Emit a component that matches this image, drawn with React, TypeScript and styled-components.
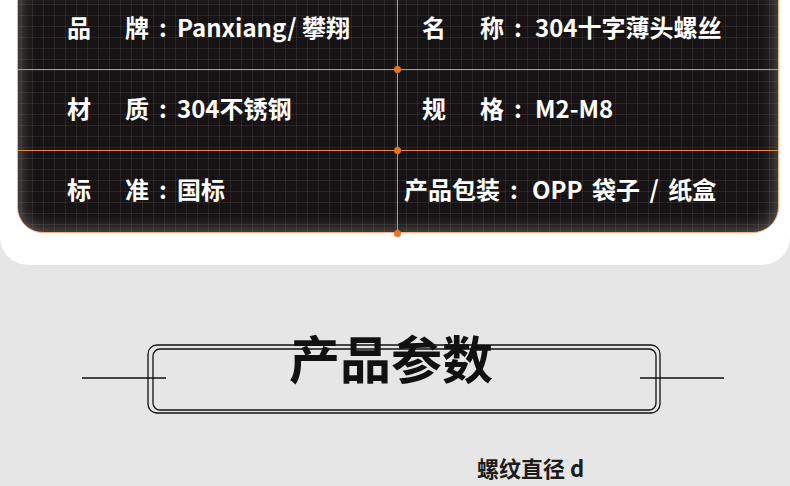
import React from 'react';
import styled, { createGlobalStyle } from 'styled-components';

const GlobalStyle = createGlobalStyle`
  html, body {
    margin: 0;
    padding: 0;
    background: #e6e6e6;
    overflow: hidden;
  }
  body {
    font-family: "Noto Sans CJK SC", "Noto Sans", sans-serif;
  }
`;

const Page = styled.div`
  width: 790px;
  height: 486px;
  display: flex;
  flex-direction: column;
  background: #e6e6e6;
`;

const TopPanel = styled.div`
  height: 265px;
  box-sizing: border-box;
  background: #ffffff;
  border-radius: 0 0 28px 28px;
  padding: 0 13px 0 17px;
  overflow: hidden;
`;

const SpecCard = styled.div`
  margin-top: -12px;
  width: 760px;
  display: grid;
  grid-template-columns: 380px 380px;
  grid-template-rows: repeat(3, 81px);
  background-color: #171314;
  background-image:
    linear-gradient(rgba(255, 255, 255, 0.075) 1px, transparent 1px),
    linear-gradient(90deg, rgba(255, 255, 255, 0.075) 1px, transparent 1px);
  background-size: 11px 11px;
  background-position: 3px 4px;
  border: 1px solid #f3b083;
  border-radius: 0 0 26px 26px;
  box-shadow: inset 0 0 18px rgba(200, 190, 185, 0.5);
`;

const Cell = styled.div<{ $left?: boolean; $last?: boolean; $pad: number }>`
  position: relative;
  display: flex;
  align-items: center;
  padding-left: ${(p) => p.$pad}px;
  padding-bottom: 6px;
  border-bottom: ${(p) => (p.$last ? 'none' : '1px solid #ee8a3c')};
  border-right: ${(p) => (p.$left ? '1px solid #ee8a3c' : 'none')};
  color: #ffffff;
  font-size: 24px;
  font-weight: 700;
  white-space: nowrap;
`;

const Dot = styled.span<{ $last?: boolean }>`
  position: absolute;
  right: -4px;
  bottom: ${(p) => (p.$last ? '-5px' : '-4px')};
  width: 7px;
  height: 7px;
  border-radius: 50%;
  background: #ea7520;
  z-index: 2;
`;

const Label = styled.span<{ $width?: number }>`
  display: flex;
  justify-content: space-between;
  width: ${(p) => (p.$width ? `${p.$width}px` : 'auto')};
`;

const Colon = styled.span<{ $wide?: boolean }>`
  width: ${(p) => (p.$wide ? '28px' : '28px')};
  text-align: center;
`;

const Value = styled.span<{ $wide?: boolean; $shift: number }>`
  margin-left: ${(p) => p.$shift}px;
  word-spacing: ${(p) => (p.$wide ? '4px' : '0')};
`;

const TitleSection = styled.div`
  margin-top: 79px;
  display: grid;
  justify-items: center;
`;

const Ornament = styled.svg`
  grid-area: 1 / 1;
  margin-left: 18px;
`;

const Title = styled.h2`
  grid-area: 1 / 1;
  margin: -12px 0 0 -8px;
  font-size: 51px;
  font-weight: 700;
  line-height: 1;
  color: #111;
  z-index: 1;
`;

const SubLabel = styled.div`
  margin: 40px 0 0 477px;
  font-size: 22px;
  font-weight: 700;
  color: #1c1c1c;
  line-height: 1;
`;

type Spec = {
  label: string[];
  value: string;
  width?: number;
  wide?: boolean;
  shift?: number;
};

const rows: [Spec, Spec][] = [
  [
    { label: ['品', '牌'], value: 'Panxiang/ 攀翔', width: 82 },
    { label: ['名', '称'], value: '304十字薄头螺丝', width: 82, shift: 3 },
  ],
  [
    { label: ['材', '质'], value: '304不锈钢', width: 82 },
    { label: ['规', '格'], value: 'M2-M8', width: 82, shift: 3 },
  ],
  [
    { label: ['标', '准'], value: '国标', width: 82 },
    { label: ['产品包装'], value: 'OPP 袋子 / 纸盒', wide: true, shift: 4 },
  ],
];

const SpecItem = ({ spec }: { spec: Spec }) => (
  <>
    <Label $width={spec.width}>
      {spec.label.map((c) => (
        <span key={c}>{c}</span>
      ))}
    </Label>
    <Colon>:</Colon>
    <Value $wide={spec.wide} $shift={spec.shift ?? 0}>
      {spec.value}
    </Value>
  </>
);

const App = () => {
  return (
    <>
      <GlobalStyle />
      <Page>
        <TopPanel>
          <SpecCard>
            {rows.map(([l, r], i) => {
              const last = i === rows.length - 1;
              return (
                <React.Fragment key={i}>
                  <Cell $left $last={last} $pad={49}>
                    <SpecItem spec={l} />
                    <Dot $last={last} />
                  </Cell>
                  <Cell $last={last} $pad={r.wide ? 6 : 24}>
                    <SpecItem spec={r} />
                  </Cell>
                </React.Fragment>
              );
            })}
          </SpecCard>
        </TopPanel>

        <TitleSection>
          <Ornament width="644" height="72" viewBox="0 0 644 72">
            <g fill="none" stroke="#111" strokeWidth="1.3">
              <rect x="66" y="1" width="512" height="68" rx="9" />
              <rect x="71" y="5" width="503" height="61" rx="7" />
              <line x1="0" y1="34" x2="84" y2="34" />
              <line x1="558" y1="34" x2="642" y2="34" />
            </g>
          </Ornament>
          <Title>产品参数</Title>
        </TitleSection>

        <SubLabel>螺纹直径 d</SubLabel>
      </Page>
    </>
  );
};

export default App;
